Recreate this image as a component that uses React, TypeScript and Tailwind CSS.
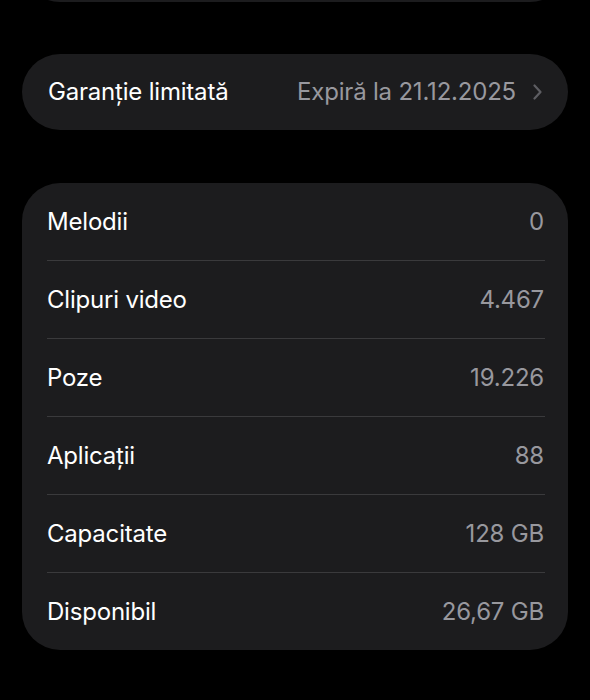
const rows = [
  { label: "Melodii", value: "0" },
  { label: "Clipuri video", value: "4.467" },
  { label: "Poze", value: "19.226" },
  { label: "Aplicații", value: "88" },
  { label: "Capacitate", value: "128 GB" },
  { label: "Disponibil", value: "26,67 GB" },
];

export default function App() {
  return (
    <div
      className="min-h-[700px] w-full overflow-hidden bg-black px-[22px] text-[24px] tracking-[-0.2px]"
      style={{ fontFamily: "Inter, 'Noto Sans', sans-serif" }}
    >
      {/* bottom edge of the card above */}
      <div className="-mt-[60px] h-[62px] rounded-b-[38px] bg-[#1c1c1e]" />

      <div className="mt-[52px] flex h-[76px] items-center justify-between rounded-[38px] bg-[#1c1c1e] pl-[26px] pr-[26px]">
        <span className="text-white">Garanție limitată</span>
        <div className="flex items-center gap-[17px] text-[#98989e]">
          <span>Expiră la 21.12.2025</span>
          <svg width="9" height="16" viewBox="0 0 9 16" fill="none">
            <path d="M1.5 1.5L7.5 8L1.5 14.5" stroke="#5d5d62" strokeWidth="2.2" strokeLinecap="round" strokeLinejoin="round" />
          </svg>
        </div>
      </div>

      <div className="mt-[53px] rounded-[38px] bg-[#1c1c1e] pl-[25px] pr-[23px]">
        {rows.map((r, i) => (
          <div
            key={r.label}
            className={
              i < rows.length - 1
                ? "flex h-[78px] items-center justify-between border-b border-[#3a3a3c] pr-[1px]"
                : "flex h-[77px] items-center justify-between pr-[1px]"
            }
          >
            <span className="text-white">{r.label}</span>
            <span className="text-[#98989e]">{r.value}</span>
          </div>
        ))}
      </div>
    </div>
  );
}
